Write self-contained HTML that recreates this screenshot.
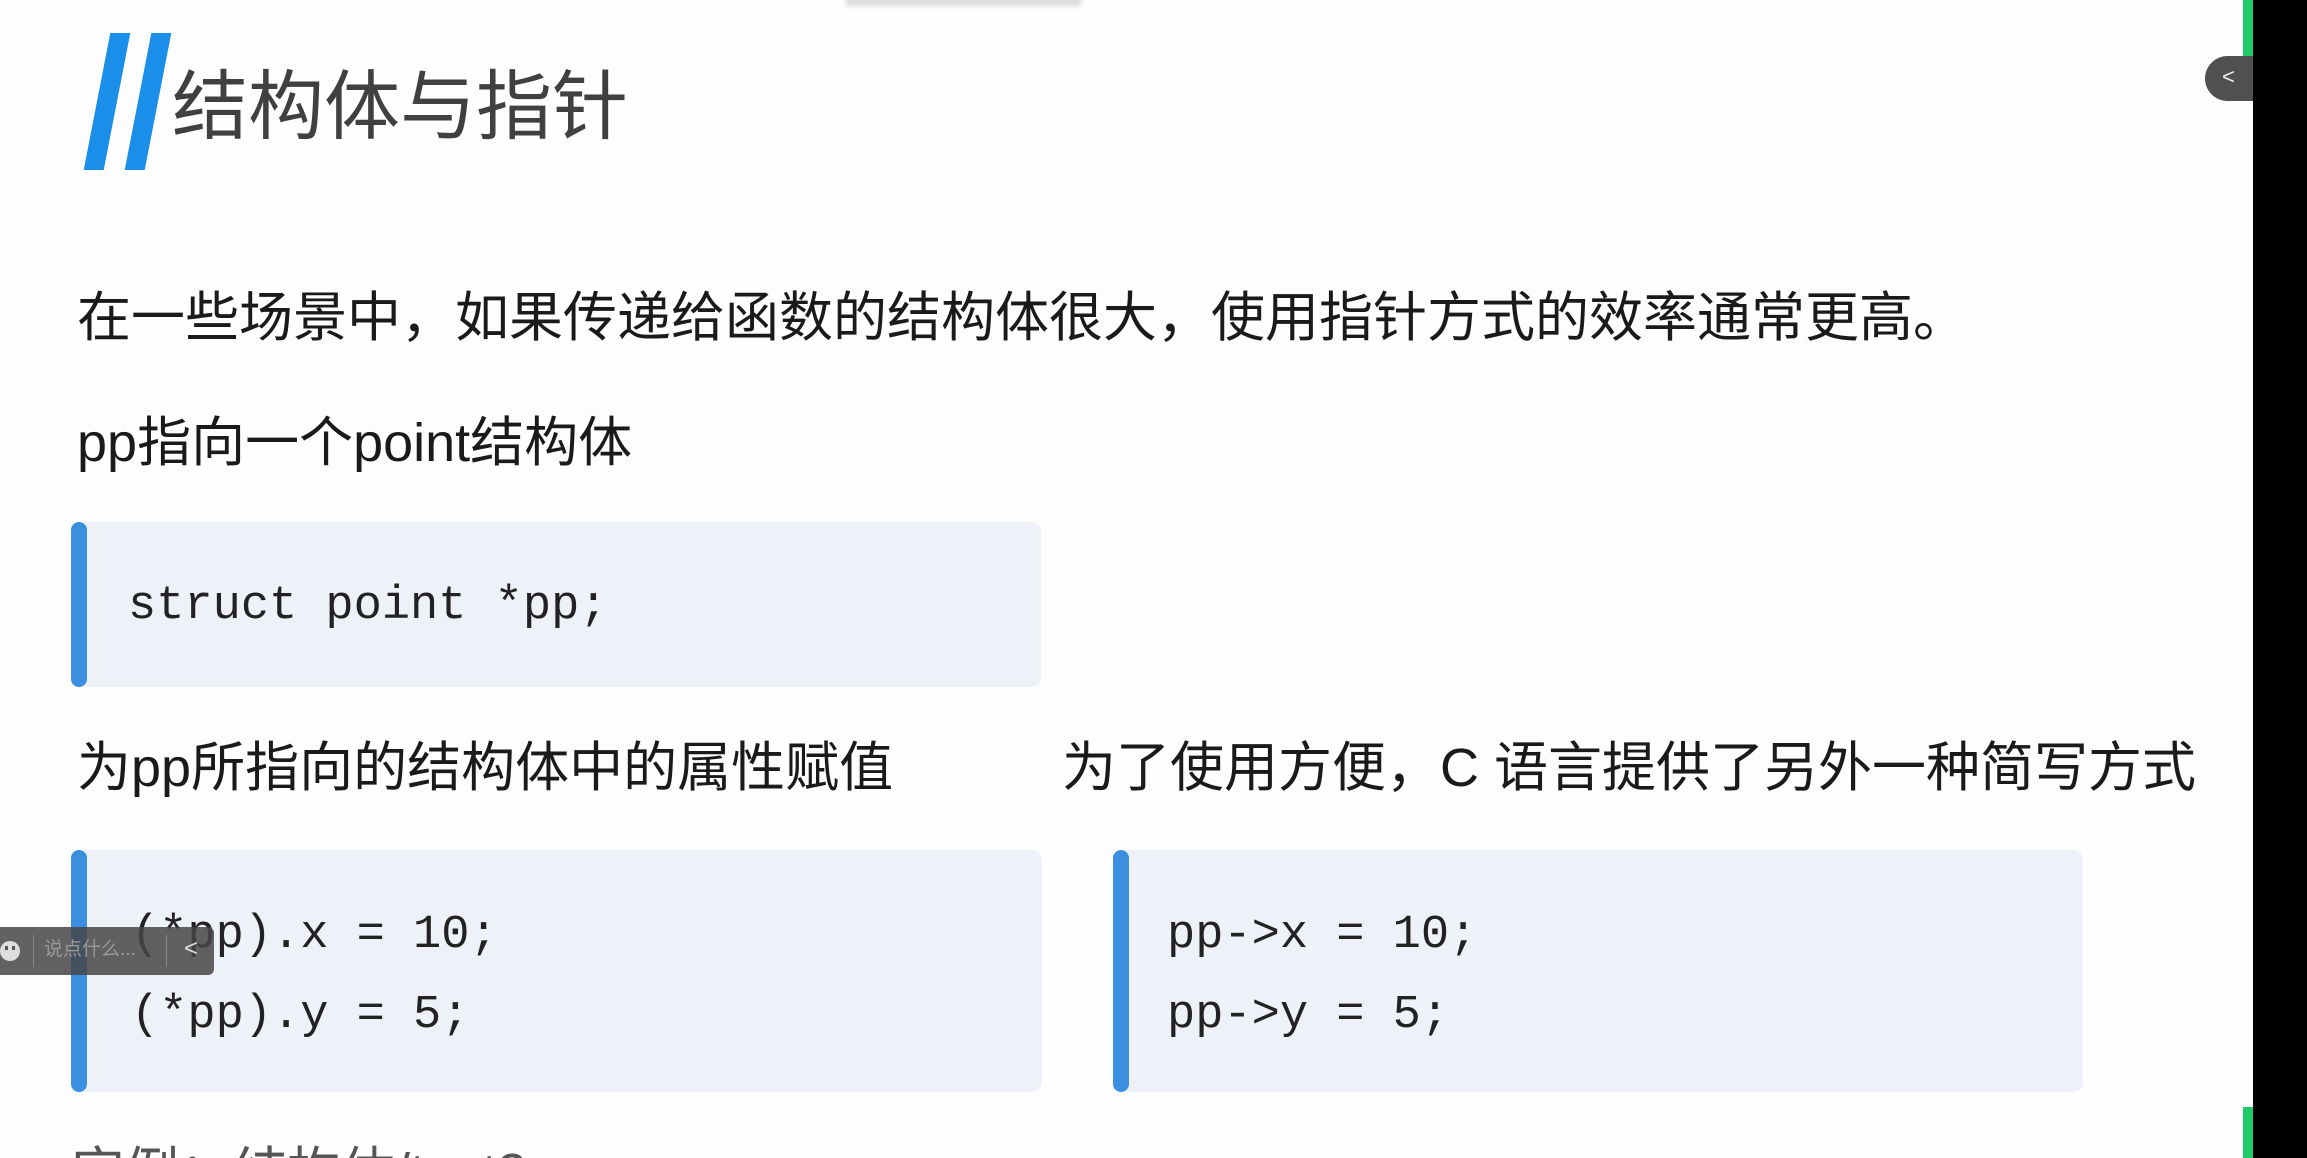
<!DOCTYPE html>
<html><head><meta charset="utf-8"><style>
*{margin:0;padding:0;box-sizing:border-box}
html,body{width:2307px;height:1158px;overflow:hidden;background:#fdfdfd}
body{position:relative;font-family:"Liberation Sans","Noto Sans CJK SC",sans-serif;color:#1a1a1a}
.abs{position:absolute;white-space:nowrap}
.bar{position:absolute;background:#1a8ee8;width:20px;height:137px;top:33px;transform:skewX(-11deg)}
.code{position:absolute;background:#eef2f8;border-radius:10px}
.code .b{position:absolute;left:0;top:0;bottom:0;width:16px;background:#3b8fe0;border-radius:8px}
.mono{position:absolute;font-family:"Liberation Mono",monospace;font-size:47px;color:#222;white-space:pre;line-height:1}
</style></head><body>
<div class="abs" style="left:846px;top:-6px;width:235px;height:12px;background:#ddd;filter:blur(2px)"></div>
<div class="bar" style="left:97px"></div>
<div class="bar" style="left:138px"></div>
<div class="abs" style="left:172px;top:63px;font-size:76px;line-height:90px;color:#404040;font-family:'Liberation Sans','Noto Sans CJK SC',sans-serif">结构体与指针</div>
<div class="abs" style="left:77px;top:283px;font-size:54px;line-height:70px">在一些场景中，如果传递给函数的结构体很大，使用指针方式的效率通常更高。</div>
<div class="abs" style="left:77px;top:410px;font-size:54px;line-height:66px">pp指向一个point结构体</div>
<div class="code" style="left:71px;top:522px;width:970px;height:165px"><div class="b"></div></div>
<div class="mono" style="left:128px;top:583px">struct point *pp;</div>
<div class="abs" style="left:77px;top:735px;font-size:54px;line-height:66px">为pp所指向的结构体中的属性赋值</div>
<div class="abs" style="left:1062px;top:735px;font-size:54px;line-height:66px">为了使用方便，C 语言提供了另外一种简写方式</div>
<div class="code" style="left:71px;top:850px;width:971px;height:242px"><div class="b"></div></div>
<div class="mono" style="left:131px;top:912px">(*pp).x = 10;</div>
<div class="mono" style="left:131px;top:992px">(*pp).y = 5;</div>
<div class="code" style="left:1113px;top:850px;width:970px;height:242px"><div class="b"></div></div>
<div class="mono" style="left:1167px;top:912px">pp-&gt;x = 10;</div>
<div class="mono" style="left:1167px;top:992px">pp-&gt;y = 5;</div>
<div class="abs" style="left:71px;top:1140px;font-size:54px;line-height:66px;color:#555">实例：结构体/test2</div>
<div class="abs" style="left:0;top:927px;width:214px;height:48px;background:rgba(70,70,70,0.85);border-radius:0 6px 6px 0"></div>
<div class="abs" style="left:0px;top:941px;width:20px;height:20px;border-radius:50%;background:#ddd"></div>
<div class="abs" style="left:5px;top:946px;width:3px;height:4px;background:#555"></div>
<div class="abs" style="left:12px;top:946px;width:3px;height:4px;background:#555"></div>
<div class="abs" style="left:33px;top:935px;width:1px;height:32px;background:#888"></div>
<div class="abs" style="left:44px;top:938px;font-size:19px;line-height:24px;color:#999">说点什么...</div>
<div class="abs" style="left:166px;top:935px;width:1px;height:32px;background:#888"></div>
<div class="abs" style="left:184px;top:936px;font-size:24px;line-height:26px;color:#ddd">&lt;</div>
<div class="abs" style="left:2243px;top:0;width:10px;height:58px;background:#1ecb6a"></div>
<div class="abs" style="left:2243px;top:1107px;width:10px;height:51px;background:#1ecb6a"></div>
<div class="abs" style="left:2205px;top:56px;width:48px;height:45px;background:#505050;border-radius:23px 0 0 23px"></div>
<div class="abs" style="left:2222px;top:64px;font-size:22px;line-height:26px;color:#eee">&lt;</div>
<div class="abs" style="left:2253px;top:0;width:54px;height:1158px;background:#000"></div>
</body></html>
